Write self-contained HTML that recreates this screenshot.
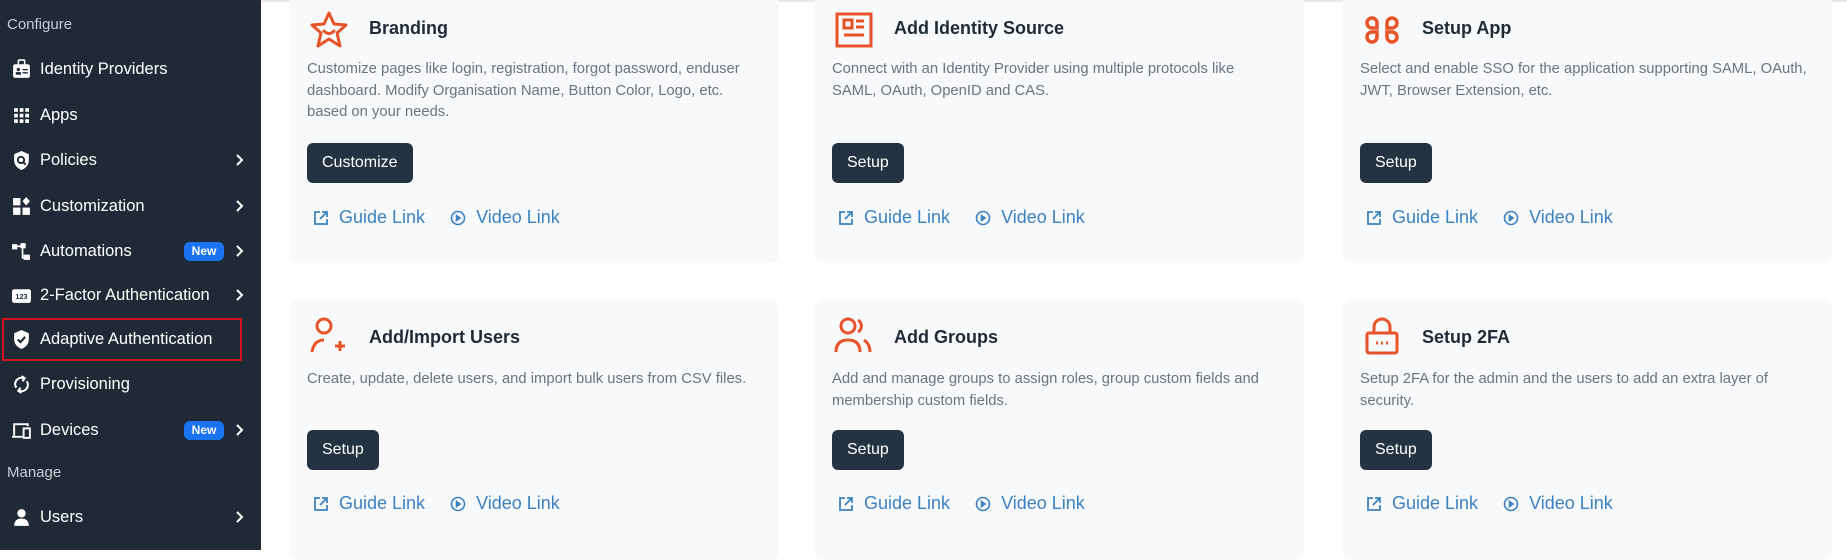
<!DOCTYPE html>
<html><head><meta charset="utf-8"><style>
*{box-sizing:border-box;margin:0;padding:0}
body{width:1847px;height:550px;overflow:hidden;background:#fff;font-family:"Liberation Sans",sans-serif;position:relative}
.sb{position:absolute;left:0;top:0;width:261px;height:550px;background:#1f2a36;color:#fff}
.sec{position:absolute;left:7px;font-size:15px;color:#c9ced4}
.it{position:absolute;left:0;width:261px;height:40px;display:flex;align-items:center;font-size:16.5px;color:#fff}
.it svg{position:absolute;left:11px;width:21px;height:21px}
.it span.t{position:absolute;left:40px}
.it svg.chev{left:234px;width:10px;height:14px}
.new{position:absolute;left:184px;width:40px;height:19px;border-radius:6px;background:#1a73f0;font-size:12px;font-weight:bold;text-align:center;line-height:19px}
.red{position:absolute;left:2px;top:318px;width:240px;height:43px;border:2px solid #d0141c}
.topline{position:absolute;left:261px;top:0;right:0;height:2px;background:#e6e8eb}
.card{position:absolute;width:489px;background:#f7f9fb;border-radius:8px}
.ic{position:absolute;left:19px;width:40px;height:40px}
.ttl{position:absolute;left:79px;font-size:18px;font-weight:bold;color:#1f2a36}
.desc{position:absolute;left:17px;width:445px;font-size:14.8px;line-height:21.5px;color:#6b7480}
.btn{position:absolute;left:17px;height:40px;padding:0 15px;background:#243242;color:#fff;border-radius:6px;font-size:16px;line-height:40px}
.lk{position:absolute;left:23px;font-size:18px;color:#3d82c0;display:flex;align-items:center}
.lk svg{width:16px;height:16px;margin-right:10px}
</style></head><body>
<div class="sb">
<div class="sec" style="top:16px">Configure</div>
<div class="it" style="top:49px"><svg viewBox="0 0 20 20"><rect x="2" y="5" width="16" height="13" rx="2" fill="#fff"/><rect x="7" y="1" width="6" height="6" rx="1" fill="none" stroke="#fff" stroke-width="1.5"/><circle cx="7" cy="10" r="1.6" fill="#1f2a36"/><rect x="4.5" y="12.5" width="5" height="2.5" fill="#1f2a36"/><rect x="11" y="9.5" width="5" height="1.3" fill="#1f2a36"/><rect x="11" y="12.5" width="5" height="1.3" fill="#1f2a36"/></svg><span class="t">Identity Providers</span></div>
<div class="it" style="top:95px"><svg viewBox="0 0 20 20" fill="#fff"><rect x="3" y="3" width="3.5" height="3.5"/><rect x="8.3" y="3" width="3.5" height="3.5"/><rect x="13.6" y="3" width="3.5" height="3.5"/><rect x="3" y="8.3" width="3.5" height="3.5"/><rect x="8.3" y="8.3" width="3.5" height="3.5"/><rect x="13.6" y="8.3" width="3.5" height="3.5"/><rect x="3" y="13.6" width="3.5" height="3.5"/><rect x="8.3" y="13.6" width="3.5" height="3.5"/><rect x="13.6" y="13.6" width="3.5" height="3.5"/></svg><span class="t">Apps</span></div>
<div class="it" style="top:140px"><svg viewBox="0 0 20 20"><path d="M10 1L3 4v6c0 4 3 7.5 7 9 4-1.5 7-5 7-9V4z" fill="#fff"/><circle cx="9.5" cy="9.5" r="3" fill="none" stroke="#1f2a36" stroke-width="1.8"/><path d="M11.5 11.5l2.5 2.5" stroke="#1f2a36" stroke-width="1.8"/></svg><span class="t">Policies</span><svg class="chev" viewBox="0 0 10 14"><path d="M3 2l5 5-5 5" stroke="#fff" stroke-width="2" fill="none"/></svg></div>
<div class="it" style="top:186px"><svg viewBox="0 0 20 20" fill="#fff"><rect x="2" y="2" width="7" height="7"/><rect x="2" y="11" width="7" height="7"/><rect x="11" y="11" width="7" height="7"/><path d="M14.5 1l3.5 4-3.5 4-3.5-4z"/></svg><span class="t">Customization</span><svg class="chev" viewBox="0 0 10 14"><path d="M3 2l5 5-5 5" stroke="#fff" stroke-width="2" fill="none"/></svg></div>
<div class="it" style="top:231px"><svg viewBox="0 0 20 20" fill="#fff"><rect x="1" y="3" width="5" height="5"/><rect x="9" y="2" width="5" height="5"/><rect x="12" y="13" width="6" height="5"/><path d="M11 7v9h2M6 5h3" stroke="#fff" stroke-width="1.6" fill="none"/></svg><span class="t">Automations</span><div class="new">New</div><svg class="chev" viewBox="0 0 10 14"><path d="M3 2l5 5-5 5" stroke="#fff" stroke-width="2" fill="none"/></svg></div>
<div class="it" style="top:275px"><svg viewBox="0 0 20 20"><rect x="1" y="4" width="18" height="13" rx="2" fill="#fff"/><text x="10" y="13.5" font-size="7" text-anchor="middle" fill="#1f2a36" font-family="Liberation Sans" font-weight="bold">123</text></svg><span class="t">2-Factor Authentication</span><svg class="chev" viewBox="0 0 10 14"><path d="M3 2l5 5-5 5" stroke="#fff" stroke-width="2" fill="none"/></svg></div>
<div class="it" style="top:319px"><svg viewBox="0 0 20 20"><path d="M10 1L3 4v6c0 4 3 7.5 7 9 4-1.5 7-5 7-9V4z" fill="#fff"/><path d="M6.5 10l2.5 2.5 4.5-5" stroke="#1f2a36" stroke-width="2" fill="none"/></svg><span class="t">Adaptive Authentication</span></div>
<div class="it" style="top:364px"><svg viewBox="0 0 20 20" fill="none" stroke="#fff" stroke-width="2"><path d="M5 13a6 6 0 0 1 7-9"/><path d="M15 7a6 6 0 0 1-7 9"/><path d="M10 2l3 2-2 3M10 18l-3-2 2-3"/></svg><span class="t">Provisioning</span></div>
<div class="it" style="top:410px"><svg viewBox="0 0 20 20" fill="none" stroke="#fff" stroke-width="1.8"><path d="M3 15V4h13v2"/><path d="M1 16h10"/><rect x="12" y="8" width="6" height="9"/></svg><span class="t">Devices</span><div class="new">New</div><svg class="chev" viewBox="0 0 10 14"><path d="M3 2l5 5-5 5" stroke="#fff" stroke-width="2" fill="none"/></svg></div>
<div class="sec" style="top:464px">Manage</div>
<div class="it" style="top:497px"><svg viewBox="0 0 20 20" fill="#fff"><circle cx="10" cy="6" r="4"/><path d="M3 18c0-5 3-7 7-7s7 2 7 7z"/></svg><span class="t">Users</span><svg class="chev" viewBox="0 0 10 14"><path d="M3 2l5 5-5 5" stroke="#fff" stroke-width="2" fill="none"/></svg></div>
<div class="red"></div>
</div>
<div class="topline"></div>

<!-- Row 1 -->
<div class="card" style="left:290px;top:-10px;height:273px">
 <svg class="ic" style="top:20px" viewBox="0 0 40 40" fill="none" stroke="#e8542a" stroke-width="3" stroke-linejoin="round"><path d="M20 3l5 11 12 1-9 8 3 13-11-7-11 7 3-13-9-8 12-1z"/><path d="M15 21q5 5 10 0" stroke-linecap="round"/></svg>
 <div class="ttl" style="top:28px">Branding</div>
 <div class="desc" style="top:69px">Customize pages like login, registration, forgot password, enduser dashboard. Modify Organisation Name, Button Color, Logo, etc. based on your needs.</div>
 <div class="btn" style="top:153px">Customize</div>
 <div class="lk" style="top:217px"><svg viewBox="0 0 16 16" fill="none" stroke="#3d82c0" stroke-width="1.8"><path d="M7 2H2v12h12V9"/><path d="M9 2h5v5M14 2L7 9"/></svg>Guide Link<span style="width:25px"></span><svg viewBox="0 0 16 16" fill="none" stroke="#3d82c0" stroke-width="1.6"><circle cx="8" cy="8" r="6.5"/><path d="M6.5 5.5v5l3.5-2.5z" fill="#3d82c0"/></svg>Video Link</div>
</div>
<div class="card" style="left:815px;top:-10px;height:273px">
 <svg class="ic" style="top:20px" viewBox="0 0 40 40" fill="none" stroke="#e8542a" stroke-width="3"><rect x="3" y="4" width="34" height="32"/><rect x="10" y="10" width="8" height="8"/><path d="M22 11h8M22 17h8M10 25h20"/></svg>
 <div class="ttl" style="top:28px">Add Identity Source</div>
 <div class="desc" style="top:69px">Connect with an Identity Provider using multiple protocols like SAML, OAuth, OpenID and CAS.</div>
 <div class="btn" style="top:153px">Setup</div>
 <div class="lk" style="top:217px"><svg viewBox="0 0 16 16" fill="none" stroke="#3d82c0" stroke-width="1.8"><path d="M7 2H2v12h12V9"/><path d="M9 2h5v5M14 2L7 9"/></svg>Guide Link<span style="width:25px"></span><svg viewBox="0 0 16 16" fill="none" stroke="#3d82c0" stroke-width="1.6"><circle cx="8" cy="8" r="6.5"/><path d="M6.5 5.5v5l3.5-2.5z" fill="#3d82c0"/></svg>Video Link</div>
</div>
<div class="card" style="left:1343px;top:-10px;height:273px">
 <svg class="ic" style="top:20px" viewBox="0 0 40 40" fill="none" stroke="#e8542a" stroke-width="3.5"><path d="M14 18H10a5 5 0 1 1 5-5v5zM26 18h4a5 5 0 1 0-5-5v5zM14 22H10a5 5 0 1 0 5 5v-5zM26 22h4a5 5 0 1 1-5 5v-5z"/></svg>
 <div class="ttl" style="top:28px">Setup App</div>
 <div class="desc" style="top:69px;width:465px">Select and enable SSO for the application supporting SAML, OAuth, JWT, Browser Extension, etc.</div>
 <div class="btn" style="top:153px">Setup</div>
 <div class="lk" style="top:217px"><svg viewBox="0 0 16 16" fill="none" stroke="#3d82c0" stroke-width="1.8"><path d="M7 2H2v12h12V9"/><path d="M9 2h5v5M14 2L7 9"/></svg>Guide Link<span style="width:25px"></span><svg viewBox="0 0 16 16" fill="none" stroke="#3d82c0" stroke-width="1.6"><circle cx="8" cy="8" r="6.5"/><path d="M6.5 5.5v5l3.5-2.5z" fill="#3d82c0"/></svg>Video Link</div>
</div>

<!-- Row 2 -->
<div class="card" style="left:290px;top:300px;height:260px">
 <svg class="ic" style="top:16px" viewBox="0 0 40 40" fill="none" stroke="#e8542a" stroke-width="3"><circle cx="15" cy="10" r="7"/><path d="M3 36q2-12 12-12"/><path d="M26 30h10M31 25v10"/></svg>
 <div class="ttl" style="top:27px">Add/Import Users</div>
 <div class="desc" style="top:69px">Create, update, delete users, and import bulk users from CSV files.</div>
 <div class="btn" style="top:130px">Setup</div>
 <div class="lk" style="top:193px"><svg viewBox="0 0 16 16" fill="none" stroke="#3d82c0" stroke-width="1.8"><path d="M7 2H2v12h12V9"/><path d="M9 2h5v5M14 2L7 9"/></svg>Guide Link<span style="width:25px"></span><svg viewBox="0 0 16 16" fill="none" stroke="#3d82c0" stroke-width="1.6"><circle cx="8" cy="8" r="6.5"/><path d="M6.5 5.5v5l3.5-2.5z" fill="#3d82c0"/></svg>Video Link</div>
</div>
<div class="card" style="left:815px;top:300px;height:260px">
 <svg class="ic" style="top:16px" viewBox="0 0 40 40" fill="none" stroke="#e8542a" stroke-width="3"><circle cx="14" cy="10" r="7"/><path d="M2 36q0-12 12-12t12 12"/><path d="M24 4a7 7 0 0 1 0 12M30 24q6 4 6 12"/></svg>
 <div class="ttl" style="top:27px">Add Groups</div>
 <div class="desc" style="top:69px">Add and manage groups to assign roles, group custom fields and membership custom fields.</div>
 <div class="btn" style="top:130px">Setup</div>
 <div class="lk" style="top:193px"><svg viewBox="0 0 16 16" fill="none" stroke="#3d82c0" stroke-width="1.8"><path d="M7 2H2v12h12V9"/><path d="M9 2h5v5M14 2L7 9"/></svg>Guide Link<span style="width:25px"></span><svg viewBox="0 0 16 16" fill="none" stroke="#3d82c0" stroke-width="1.6"><circle cx="8" cy="8" r="6.5"/><path d="M6.5 5.5v5l3.5-2.5z" fill="#3d82c0"/></svg>Video Link</div>
</div>
<div class="card" style="left:1343px;top:300px;height:260px">
 <svg class="ic" style="top:16px" viewBox="0 0 40 40" fill="none" stroke="#e8542a" stroke-width="3"><path d="M12 17V11a8 8 0 0 1 16 0v6"/><rect x="5" y="17" width="30" height="20" rx="2"/><path d="M14 27h2M19 27h2M24 27h2"/></svg>
 <div class="ttl" style="top:27px">Setup 2FA</div>
 <div class="desc" style="top:69px">Setup 2FA for the admin and the users to add an extra layer of security.</div>
 <div class="btn" style="top:130px">Setup</div>
 <div class="lk" style="top:193px"><svg viewBox="0 0 16 16" fill="none" stroke="#3d82c0" stroke-width="1.8"><path d="M7 2H2v12h12V9"/><path d="M9 2h5v5M14 2L7 9"/></svg>Guide Link<span style="width:25px"></span><svg viewBox="0 0 16 16" fill="none" stroke="#3d82c0" stroke-width="1.6"><circle cx="8" cy="8" r="6.5"/><path d="M6.5 5.5v5l3.5-2.5z" fill="#3d82c0"/></svg>Video Link</div>
</div>
</body></html>
